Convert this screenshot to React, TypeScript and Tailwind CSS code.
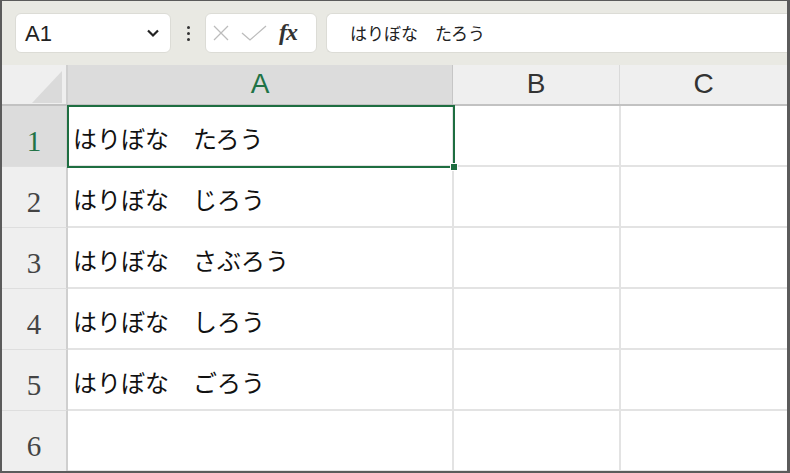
import React from 'react';

const names = ['はりぼな　たろう', 'はりぼな　じろう', 'はりぼな　さぶろう', 'はりぼな　しろう', 'はりぼな　ごろう', ''];

const jp = { fontFamily: '"Noto Sans CJK JP", "Noto Sans", sans-serif' };

const App: React.FC = () => {
  return (
    <div className="w-[790px] h-[473px] bg-white border-t border-l-2 border-r-[3px] border-b-2 border-[#5b5b5b] flex flex-col overflow-hidden">
      {/* Formula bar */}
      <div className="h-[64px] bg-[#e9e9e3] flex items-start pt-3 pl-[13px] shrink-0">
        <div className="w-[156px] h-[40px] bg-white rounded-md border border-[#dcdcd6] flex items-center pl-[9px] pr-[10px] justify-between">
          <span className="text-[22px] text-[#222]" style={{ fontFamily: '"Liberation Sans", Arial, sans-serif' }}>
            A1
          </span>
          <svg width="14" height="10" viewBox="0 0 14 10">
            <path d="M2 2.5 L7 7.5 L12 2.5" fill="none" stroke="#222" strokeWidth="2.2" />
          </svg>
        </div>
        <div className="w-[34px] h-[40px] flex flex-col items-center justify-center gap-[3px]">
          <div className="w-[3px] h-[3px] rounded-full bg-[#333]" />
          <div className="w-[3px] h-[3px] rounded-full bg-[#333]" />
          <div className="w-[3px] h-[3px] rounded-full bg-[#333]" />
        </div>
        <div className="w-[112px] h-[40px] bg-white rounded-md border border-[#dcdcd6] flex items-center pl-[7px] gap-[12px]">
          <svg width="16" height="16" viewBox="0 0 16 16">
            <path d="M1 1 L15 15 M15 1 L1 15" stroke="#bcbcbc" strokeWidth="1.3" fill="none" />
          </svg>
          <svg width="26" height="16" viewBox="0 0 26 16">
            <path d="M1 8 L9 15 L25 1" stroke="#bcbcbc" strokeWidth="1.3" fill="none" />
          </svg>
          <span
            className="text-[24px] italic font-semibold text-[#333] leading-none -mt-[2px] tracking-[-1px]"
            style={{ fontFamily: '"Liberation Serif", "Times New Roman", serif' }}
          >
            fx
          </span>
        </div>
        <div className="w-[9px]" />
        <div className="flex-1 h-[40px] bg-white rounded-l-md border border-r-0 border-[#dcdcd6] flex items-center pl-[23px]">
          <span className="text-[17px] text-[#222]" style={jp}>
            はりぼな　たろう
          </span>
        </div>
      </div>

      {/* Column headers */}
      <div
        className="h-[41px] flex shrink-0 border-b-2 border-[#c2c2c2] bg-[#efefef]"
        style={{ fontFamily: '"Liberation Sans", Arial, sans-serif' }}
      >
        <div className="w-[66px] border-r-2 border-[#cfcfcf] flex items-center justify-end pr-[4px] pt-1">
          <svg width="30" height="32" viewBox="0 0 30 32">
            <path d="M30 0 L30 32 L0 32 Z" fill="#dadada" />
          </svg>
        </div>
        <div className="w-[385px] bg-[#dcdcdc] border-r border-[#c6c6c6] flex items-end justify-center text-[28px] text-[#217346] leading-none">
          <span className="pb-[6px]">A</span>
        </div>
        <div className="w-[167px] border-r border-[#dadada] flex items-end justify-center text-[28px] text-[#333] leading-none">
          <span className="pb-[6px]">B</span>
        </div>
        <div className="flex-1 flex items-end justify-center text-[28px] text-[#333] leading-none">
          <span className="pb-[6px]">C</span>
        </div>
      </div>

      {/* Rows */}
      <div className="flex-1 flex flex-col relative">
        {names.map((n, i) => (
          <div key={i} className="h-[61px] flex shrink-0">
            <div
              className={`w-[66px] border-r-2 border-[#cfcfcf] border-b border-b-[#dedede] flex items-end justify-center pb-[10px] text-[29px] leading-none ${
                i === 0 ? 'bg-[#dcdcdc] text-[#217346]' : 'bg-[#efefef] text-[#444]'
              }`}
              style={{ fontFamily: '"Liberation Serif", "Times New Roman", serif' }}
            >
              {i + 1}
            </div>
            <div
              className="w-[386px] border-r-2 border-b-2 border-[#e3e3e3] flex items-end pl-[5px] pb-[15px] text-[24px] leading-none text-[#111]"
              style={jp}
            >
              {n}
            </div>
            <div className="w-[167px] border-r-2 border-b-2 border-[#e3e3e3]" />
            <div className="flex-1 border-b-2 border-[#e3e3e3]" />
          </div>
        ))}

        {/* Active cell selection */}
        <div className="absolute left-[65px] -top-[1px] w-[388px] h-[63px] border-2 border-[#1e6e41] pointer-events-none">
          <div className="absolute -right-[5px] -bottom-[5px] w-[8px] h-[8px] bg-[#1e6e41] border border-white" />
        </div>
      </div>
    </div>
  );
};

export default App;
